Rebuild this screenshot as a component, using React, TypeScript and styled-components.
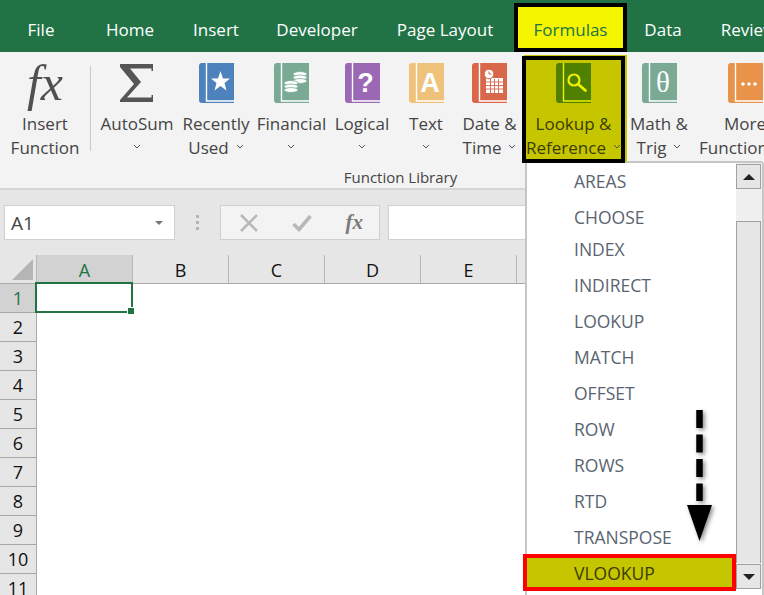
import React from "react";
import styled, { createGlobalStyle } from "styled-components";

const GlobalStyle = createGlobalStyle`
  html, body {
    margin: 0;
    padding: 0;
    background: #fff;
  }
  * {
    box-sizing: border-box;
  }
`;

const Page = styled.div`
  position: relative;
  width: 764px;
  height: 595px;
  overflow: hidden;
  font-family: "Open Sans", "Noto Sans", sans-serif;
  color: #444;
  background: #fff;
`;

const TabBar = styled.div`
  display: flex;
  align-items: stretch;
  height: 52px;
  background: #217346;
`;

const Tab = styled.div<{ $width: number; $active?: boolean; $gap?: number }>`
  flex: none;
  width: ${(p) => p.$width}px;
  margin-top: 3px;
  margin-right: ${(p) => p.$gap ?? 0}px;
  display: flex;
  align-items: center;
  justify-content: center;
  padding-top: 3px;
  font-size: 17px;
  white-space: nowrap;
  color: ${(p) => (p.$active ? "#217346" : "#fff")};
  background: ${(p) => (p.$active ? "#f5f500" : "transparent")};
  border: ${(p) => (p.$active ? "4px solid #000" : "none")};
`;

const Ribbon = styled.div`
  height: 138px;
  background: #f3f3f3;
  border-bottom: 2px solid #d4d4d4;
  overflow: hidden;
`;

const Group = styled.div`
  width: 801px;
  display: flex;
  flex-direction: column;
`;

const Buttons = styled.div`
  display: flex;
  height: 111px;
`;

const RibbonButton = styled.div<{ $width: number; $selected?: boolean }>`
  position: relative;
  z-index: ${(p) => (p.$selected ? 2 : "auto")};
  flex: none;
  width: ${(p) => p.$width}px;
  height: ${(p) => (p.$selected ? "107px" : "auto")};
  margin-top: ${(p) => (p.$selected ? "4px" : "0")};
  padding-top: ${(p) => (p.$selected ? "3px" : "11px")};
  display: flex;
  flex-direction: column;
  align-items: center;
  color: ${(p) => (p.$selected ? "#3c3c00" : "#444")};
  background: ${(p) => (p.$selected ? "#c6c600" : "transparent")};
  border: ${(p) => (p.$selected ? "4px solid #000" : "none")};
  box-shadow: ${(p) => (p.$selected ? "2px -1px 0 #c6c600" : "none")};
`;

const IconSlot = styled.div`
  height: 41px;
  display: flex;
  align-items: center;
  justify-content: center;
`;

const FxMark = styled.span`
  font-family: "Liberation Serif", serif;
  font-style: italic;
  font-size: 50px;
  line-height: 41px;
  color: #505050;
`;

const Label = styled.div`
  margin-top: 8px;
  font-size: 17px;
  line-height: 24px;
  text-align: center;
  white-space: nowrap;
`;

const Line = styled.div`
  height: 24px;
  display: flex;
  align-items: center;
  justify-content: center;
  gap: 7px;
`;

const Separator = styled.div`
  flex: none;
  width: 1px;
  height: 85px;
  margin: 14px 5px 0 0;
  background: #c8c8c8;
`;

const GroupName = styled.div`
  margin-top: 4px;
  font-size: 15px;
  line-height: 20px;
  text-align: center;
  color: #444;
`;

const FormulaBar = styled.div`
  height: 65px;
  padding: 15px 0 0 4px;
  display: flex;
  align-items: flex-start;
  background: #e6e6e6;
`;

const NameBox = styled.div`
  flex: none;
  width: 171px;
  height: 35px;
  padding: 0 11px 0 6px;
  display: flex;
  align-items: center;
  justify-content: space-between;
  font-size: 19px;
  color: #444;
  background: #fff;
  border: 1px solid #d0d0d0;
`;

const CaretDown = styled.span`
  width: 0;
  height: 0;
  border-left: 4px solid transparent;
  border-right: 4px solid transparent;
  border-top: 4px solid #777;
`;

const Grip = styled.div`
  flex: none;
  width: 45px;
  height: 35px;
  display: flex;
  flex-direction: column;
  align-items: center;
  justify-content: center;
  gap: 3px;
`;

const GripDot = styled.span`
  width: 3px;
  height: 3px;
  background: #b4b4b4;
`;

const FormulaButtons = styled.div`
  flex: none;
  width: 160px;
  height: 35px;
  padding: 0 16px 0 19px;
  display: flex;
  align-items: center;
  justify-content: space-between;
  background: #f3f3f3;
  border: 1px solid #d0d0d0;
`;

const FormulaFx = styled.span`
  font-family: "Liberation Serif", serif;
  font-style: italic;
  font-weight: 700;
  font-size: 21px;
  color: #7a7a7a;
`;

const FormulaInput = styled.div`
  flex: 1;
  height: 35px;
  margin-left: 8px;
  background: #fff;
  border: 1px solid #d0d0d0;
`;

const HeaderRow = styled.div`
  display: flex;
  height: 29px;
  background: #e6e6e6;
  border-bottom: 1px solid #a8a8a8;
`;

const Corner = styled.div`
  flex: none;
  width: 37px;
  padding: 4px 3px 2px 12px;
  border-right: 1px solid #b8b8b8;
`;

const ColumnHeader = styled.div<{ $active?: boolean }>`
  flex: none;
  width: 96px;
  display: flex;
  align-items: center;
  justify-content: center;
  padding-top: 2px;
  font-size: 18px;
  color: ${(p) => (p.$active ? "#217346" : "#111")};
  background: ${(p) => (p.$active ? "#d2d2d2" : "transparent")};
  border-right: 1px solid #b8b8b8;
`;

const SheetBody = styled.div`
  display: flex;
`;

const RowHeaders = styled.div`
  flex: none;
  width: 37px;
  background: #e6e6e6;
  border-right: 1px solid #a8a8a8;
`;

const RowHeader = styled.div<{ $active?: boolean }>`
  height: 29px;
  display: flex;
  align-items: center;
  justify-content: center;
  font-size: 18px;
  color: ${(p) => (p.$active ? "#217346" : "#111")};
  background: ${(p) => (p.$active ? "#d2d2d2" : "transparent")};
  border-bottom: 1px solid #a8a8a8;
`;

const Cells = styled.div`
  position: relative;
  flex: 1;
  background: #fff;
`;

const SelectedCell = styled.div`
  position: absolute;
  left: -2px;
  top: -2px;
  width: 98px;
  height: 31px;
  border: 2px solid #217346;
`;

const FillHandle = styled.span`
  position: absolute;
  right: -4px;
  bottom: -4px;
  width: 8px;
  height: 8px;
  background: #217346;
  border: 1px solid #fff;
`;

const Menu = styled.div`
  position: absolute;
  left: 525px;
  top: 161px;
  width: 239px;
  height: 434px;
  display: flex;
  background: #fff;
  border-left: 2px solid #c6c6c6;
  border-top: 2px solid #c6c6c6;
  border-right: 2px solid #c6c6c6;
  border-top-left-radius: 2px;
  border-top-right-radius: 4px;
`;

const MenuList = styled.div`
  flex: none;
  width: 209px;
  display: flex;
  flex-direction: column;
`;

const MenuItem = styled.div<{ $pull?: number; $selected?: boolean }>`
  height: 36px;
  margin-top: ${(p) => -(p.$pull ?? 0)}px;
  display: flex;
  align-items: center;
  flex: none;
  padding-left: 47px;
  font-size: 17.5px;
  color: ${(p) => (p.$selected ? "#3c3c00" : "#5a6470")};
`;

const SelectedItem = styled(MenuItem)`
  width: 213px;
  height: 37px;
  margin-left: -4px;
  margin-top: -1px;
  padding-left: 47px;
  background: #c6c600;
  border: 4px solid #f00;
`;

const Scrollbar = styled.div`
  flex: none;
  width: 26px;
  display: flex;
  flex-direction: column;
  background: #f0f0f0;
`;

const ScrollButton = styled.div`
  flex: none;
  width: 25px;
  height: 25px;
  margin-top: 1px;
  display: flex;
  align-items: center;
  justify-content: center;
  background: #e6e6e6;
  border: 1px solid #a0a0a0;
`;

const ScrollTriangle = styled.span<{ $up?: boolean }>`
  width: 0;
  height: 0;
  border-left: 6px solid transparent;
  border-right: 6px solid transparent;
  border-bottom: ${(p) => (p.$up ? "6px solid #222" : "none")};
  border-top: ${(p) => (p.$up ? "none" : "6px solid #222")};
`;

const ScrollThumb = styled.div`
  flex: 1;
  margin-top: 32px;
  width: 25px;
  background: #e6e6e6;
  border: 1px solid #a0a0a0;
  border-bottom: none;
`;

const ScrollFoot = styled.div`
  flex: none;
  height: 6px;
  background: #fff;
`;

const DashedArrow = styled.svg`
  position: absolute;
  left: 680px;
  top: 405px;
  filter: drop-shadow(2px 2px 2px rgba(0, 0, 0, 0.45));
`;

const ChevronIcon = styled.svg`
  flex: none;
  transform: translateY(-2px);
`;

const Chevron = () => (
  <ChevronIcon width="8" height="5" viewBox="0 0 8 5">
    <path d="M1 1 L4 4 L7 1" fill="none" stroke="#555" strokeWidth="1" />
  </ChevronIcon>
);

const Book = ({
  color,
  line = "#fff",
  children,
}: {
  color: string;
  line?: string;
  children?: React.ReactNode;
}) => (
  <svg width="35" height="41" viewBox="0 0 35 41">
    <path d="M3 0 H35 V40 H3 Q0 40 0 37 V3 Q0 0 3 0 Z" fill={color} />
    <path d="M7.5 0 V38 H35" stroke={line} strokeWidth="1.4" fill="none" />
    {children}
  </svg>
);

const Sigma = () => (
  <svg width="34" height="39" viewBox="0 0 34 39">
    <path
      d="M0 0 H33 V7 H31.500 V4.500 H10 L21 18 L7 33.500 H31.500 V31 H33 V38 H0 V36 L14 20 L0 3 Z"
      fill="#555"
    />
  </svg>
);

const Coins = () => (
  <g fill="#fff" stroke="#7aa994" strokeWidth="0.8">
    <ellipse cx="26" cy="11" rx="7" ry="2.4" />
    <ellipse cx="26" cy="14.500" rx="7" ry="2.4" />
    <ellipse cx="26" cy="18" rx="7" ry="2.4" />
    <ellipse cx="17" cy="20" rx="7" ry="2.4" />
    <ellipse cx="17" cy="23.500" rx="7" ry="2.4" />
    <ellipse cx="17" cy="27" rx="7" ry="2.4" />
  </g>
);

const CalendarMark = () => (
  <g>
    <rect x="14" y="15" width="17" height="15" fill="#fff" />
    <path
      d="M14 19 H31 M14 22.500 H31 M14 26 H31 M18.500 16 V30 M22.500 16 V30 M26.500 16 V30"
      stroke="#d9674a"
      strokeWidth="0.9"
    />
    <circle cx="17" cy="11" r="4.800" fill="#fff" stroke="#d9674a" strokeWidth="1" />
    <path d="M17 8.500 V11 H19.500" stroke="#d9674a" strokeWidth="1" fill="none" />
  </g>
);

const menuItems: { name: string; pull?: number }[] = [
  { name: "AREAS" },
  { name: "CHOOSE" },
  { name: "INDEX", pull: 4 },
  { name: "INDIRECT" },
  { name: "LOOKUP" },
  { name: "MATCH" },
  { name: "OFFSET" },
  { name: "ROW" },
  { name: "ROWS" },
  { name: "RTD" },
  { name: "TRANSPOSE" },
];

const tabs = [
  { name: "File", width: 82 },
  { name: "Home", width: 96 },
  { name: "Insert", width: 76 },
  { name: "Developer", width: 126 },
  { name: "Page Layout", width: 130, gap: 4 },
];

const rows = ["1", "2", "3", "4", "5", "6", "7", "8", "9", "10", "11"];

const App = () => (
  <Page>
    <GlobalStyle />
    <TabBar>
      {tabs.map((t) => (
        <Tab key={t.name} $width={t.width} $gap={t.gap}>
          {t.name}
        </Tab>
      ))}
      <Tab $width={113} $active>
        Formulas
      </Tab>
      <Tab $width={72}>Data</Tab>
      <Tab $width={99}>Review</Tab>
    </TabBar>

    <Ribbon>
      <Group>
        <Buttons>
          <RibbonButton $width={90}>
            <IconSlot>
              <FxMark>fx</FxMark>
            </IconSlot>
            <Label>
              <Line>Insert</Line>
              <Line>Function</Line>
            </Label>
          </RibbonButton>
          <Separator />
          <RibbonButton $width={82}>
            <IconSlot>
              <Sigma />
            </IconSlot>
            <Label>
              <Line>AutoSum</Line>
              <Line>
                <Chevron />
              </Line>
            </Label>
          </RibbonButton>
          <RibbonButton $width={76}>
            <IconSlot>
              <Book color="#4d82bc">
                <path
                  d="M21.500 8 L24 15.500 H31 L25.500 20 L27.500 27.500 L21.500 23 L15.500 27.500 L17.500 20 L12 15.500 H19 Z"
                  fill="#fff"
                />
              </Book>
            </IconSlot>
            <Label>
              <Line>Recently</Line>
              <Line>
                Used <Chevron />
              </Line>
            </Label>
          </RibbonButton>
          <RibbonButton $width={75}>
            <IconSlot>
              <Book color="#7aa994">
                <Coins />
              </Book>
            </IconSlot>
            <Label>
              <Line>Financial</Line>
              <Line>
                <Chevron />
              </Line>
            </Label>
          </RibbonButton>
          <RibbonButton $width={66}>
            <IconSlot>
              <Book color="#9a68b5">
                <text
                  x="20.500"
                  y="29"
                  textAnchor="middle"
                  fontFamily="Liberation Sans, sans-serif"
                  fontWeight="700"
                  fontSize="27"
                  fill="#fff"
                >
                  ?
                </text>
              </Book>
            </IconSlot>
            <Label>
              <Line>Logical</Line>
              <Line>
                <Chevron />
              </Line>
            </Label>
          </RibbonButton>
          <RibbonButton $width={62}>
            <IconSlot>
              <Book color="#efc27a">
                <text
                  x="21"
                  y="29"
                  textAnchor="middle"
                  fontFamily="Liberation Sans, sans-serif"
                  fontWeight="700"
                  fontSize="27"
                  fill="#fff"
                >
                  A
                </text>
              </Book>
            </IconSlot>
            <Label>
              <Line>Text</Line>
              <Line>
                <Chevron />
              </Line>
            </Label>
          </RibbonButton>
          <RibbonButton $width={65}>
            <IconSlot>
              <Book color="#d9674a">
                <CalendarMark />
              </Book>
            </IconSlot>
            <Label>
              <Line>Date &amp;</Line>
              <Line>
                Time <Chevron />
              </Line>
            </Label>
          </RibbonButton>
          <RibbonButton $width={103} $selected>
            <IconSlot>
              <Book color="#4f8000" line="#f0f000">
                <circle cx="18" cy="17" r="5.500" fill="none" stroke="#f0f000" strokeWidth="2.200" />
                <path d="M22.500 21.500 L29.500 27.500" stroke="#f0f000" strokeWidth="2.800" strokeLinecap="round" />
              </Book>
            </IconSlot>
            <Label>
              <Line>Lookup &amp;</Line>
              <Line>
                Reference <Chevron />
              </Line>
            </Label>
          </RibbonButton>
          <RibbonButton $width={68}>
            <IconSlot>
              <Book color="#7aa994">
                <text
                  x="21"
                  y="29"
                  textAnchor="middle"
                  fontFamily="Liberation Serif, serif"
                  fontSize="29"
                  fill="#fff"
                >
                  θ
                </text>
              </Book>
            </IconSlot>
            <Label>
              <Line>Math &amp;</Line>
              <Line>
                Trig <Chevron />
              </Line>
            </Label>
          </RibbonButton>
          <RibbonButton $width={104}>
            <IconSlot>
              <Book color="#e8924a">
                <circle cx="15" cy="21" r="1.800" fill="#fff" />
                <circle cx="21" cy="21" r="1.800" fill="#fff" />
                <circle cx="27" cy="21" r="1.800" fill="#fff" />
              </Book>
            </IconSlot>
            <Label>
              <Line>More</Line>
              <Line>
                Functions <Chevron />
              </Line>
            </Label>
          </RibbonButton>
        </Buttons>
        <GroupName>Function Library</GroupName>
      </Group>
    </Ribbon>

    <FormulaBar>
      <NameBox>
        A1
        <CaretDown />
      </NameBox>
      <Grip>
        <GripDot />
        <GripDot />
        <GripDot />
      </Grip>
      <FormulaButtons>
        <svg width="18" height="18" viewBox="0 0 18 18">
          <path d="M1 1 L17 17 M17 1 L1 17" stroke="#b8b8b8" strokeWidth="2.500" />
        </svg>
        <svg width="20" height="18" viewBox="0 0 20 18">
          <path d="M1.500 10 L7 15.500 L18.500 2" stroke="#b8b8b8" strokeWidth="3.500" fill="none" />
        </svg>
        <FormulaFx>fx</FormulaFx>
      </FormulaButtons>
      <FormulaInput />
    </FormulaBar>

    <HeaderRow>
      <Corner>
        <svg width="21" height="21" viewBox="0 0 21 21">
          <path d="M21 0 V21 H0 Z" fill="#b5b5b5" />
        </svg>
      </Corner>
      <ColumnHeader $active>A</ColumnHeader>
      <ColumnHeader>B</ColumnHeader>
      <ColumnHeader>C</ColumnHeader>
      <ColumnHeader>D</ColumnHeader>
      <ColumnHeader>E</ColumnHeader>
      <ColumnHeader>F</ColumnHeader>
    </HeaderRow>

    <SheetBody>
      <RowHeaders>
        {rows.map((r, i) => (
          <RowHeader key={r} $active={i === 0}>
            {r}
          </RowHeader>
        ))}
      </RowHeaders>
      <Cells>
        <SelectedCell>
          <FillHandle />
        </SelectedCell>
      </Cells>
    </SheetBody>

    <Menu>
      <MenuList>
        {menuItems.map((m) => (
          <MenuItem key={m.name} $pull={m.pull}>
            {m.name}
          </MenuItem>
        ))}
        <SelectedItem $selected>VLOOKUP</SelectedItem>
      </MenuList>
      <Scrollbar>
        <ScrollButton>
          <ScrollTriangle $up />
        </ScrollButton>
        <ScrollThumb />
        <ScrollButton>
          <ScrollTriangle />
        </ScrollButton>
        <ScrollFoot />
      </Scrollbar>
    </Menu>

    <DashedArrow width="40" height="140" viewBox="0 0 40 140">
      <path d="M19.500 5 V96" stroke="#000" strokeWidth="6.500" strokeDasharray="18 6.500" fill="none" />
      <path d="M7 100 H32 L19.500 136 Z" fill="#000" />
    </DashedArrow>
  </Page>
);

export default App;
